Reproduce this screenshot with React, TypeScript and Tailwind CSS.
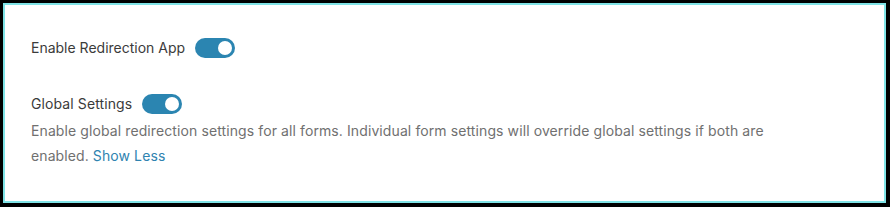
import { useState } from "react";

function Toggle({ on, onChange }: { on: boolean; onChange: () => void }) {
  return (
    <button
      onClick={onChange}
      className={
        "relative h-[20px] w-[40px] rounded-full transition-colors " +
        (on ? "bg-[#2b85b1]" : "bg-gray-300")
      }
    >
      <span
        className={
          "absolute top-[3px] h-[14px] w-[14px] rounded-full bg-white transition-all " +
          (on ? "left-[23px]" : "left-[3px]")
        }
      />
    </button>
  );
}

export default function App() {
  const [appOn, setAppOn] = useState(true);
  const [globalOn, setGlobalOn] = useState(true);
  const [expanded, setExpanded] = useState(true);

  return (
    <div
      className="h-[207px] w-[890px] bg-black pb-[4px] pl-[3px] pr-[4px] pt-[3px]"
      style={{ fontFamily: "Inter, 'Liberation Sans', sans-serif" }}
    >
      <div className="h-full border-2 border-[#7fe3e6] bg-white pl-[26px] pt-[32px]">
        <div className="flex items-center gap-[10px]">
          <span className="text-[14px] text-[#3b3b3b]">Enable Redirection App</span>
          <Toggle on={appOn} onChange={() => setAppOn(!appOn)} />
        </div>

        <div className="mt-[35px] flex items-center gap-[10px]">
          <span className="text-[14px] tracking-[0.1px] text-[#3b3b3b]">Global Settings</span>
          <Toggle on={globalOn} onChange={() => setGlobalOn(!globalOn)} />
        </div>

        <p className="mt-[4px] max-w-[780px] text-[14px] leading-[25px] tracking-[0.1px] text-[#707070]">
          <span>
            {expanded
              ? "Enable global redirection settings for all forms. Individual form settings will override global settings if both are enabled."
              : "Enable global redirection settings for all forms..."}
          </span>
          <button
            onClick={() => setExpanded(!expanded)}
            className="ml-[4px] text-[#2f83b0]"
          >
            {expanded ? "Show Less" : "Show More"}
          </button>
        </p>
      </div>
    </div>
  );
}
